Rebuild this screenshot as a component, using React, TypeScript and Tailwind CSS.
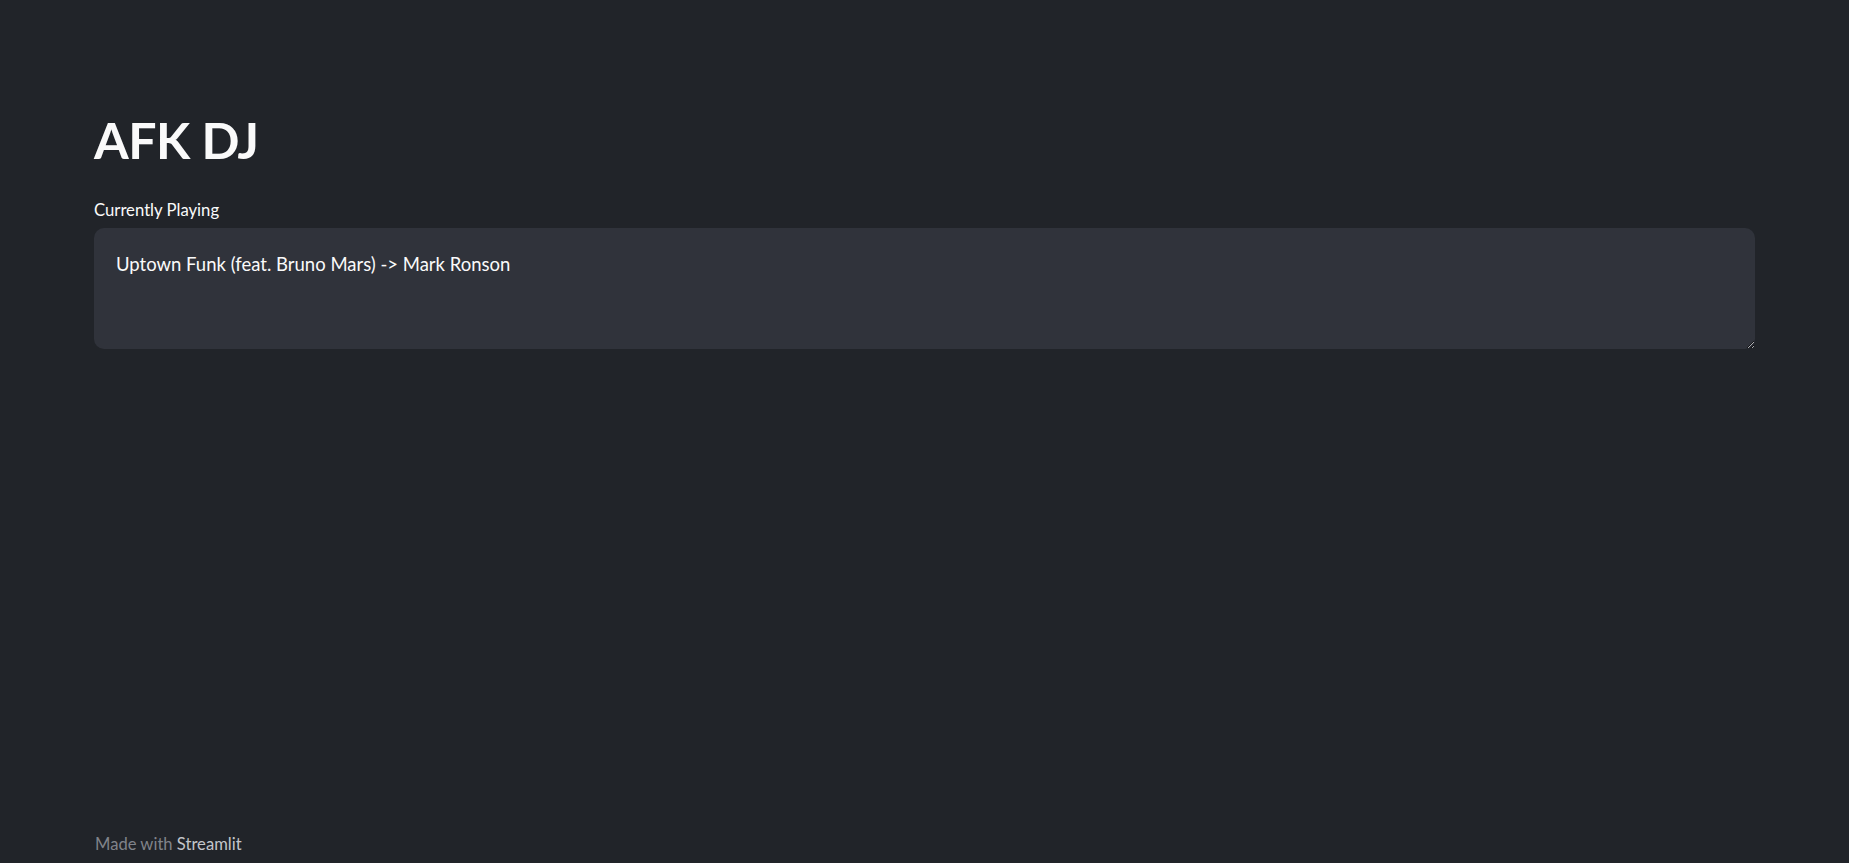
import React from 'react';

const font = { fontFamily: 'Lato, "Noto Sans", sans-serif' };

const App: React.FC = () => {
  return (
    <div className="min-h-screen bg-[#212429] text-white flex flex-col" style={font}>
      <main className="flex-1 px-[94px] pt-[110px]">
        <h1 className="text-[50px] font-bold leading-[1.2] tracking-[-0.5px] text-[#fafafa]">AFK DJ</h1>
        <div className="mt-[27px]">
          <label className="block text-[16.7px] leading-[1.6] text-[#fafafa] mb-[4px]">Currently Playing</label>
          <textarea
            readOnly
            defaultValue="Uptown Funk (feat. Bruno Mars) -> Mark Ronson"
            className="block w-[1661px] h-[121px] rounded-[10px] bg-[#30333b] pl-[22px] pr-[21px] pt-[22px] pb-[12px] text-[18.5px] leading-[1.6] text-[#fafafa] outline-none"
          />
        </div>
      </main>
      <footer className="px-[95px] pb-[5px] text-[16.6px] leading-[1.6] text-[#80838a]">
        Made with <span className="text-[#c3c6cb]">Streamlit</span>
      </footer>
    </div>
  );
};

export default App;
